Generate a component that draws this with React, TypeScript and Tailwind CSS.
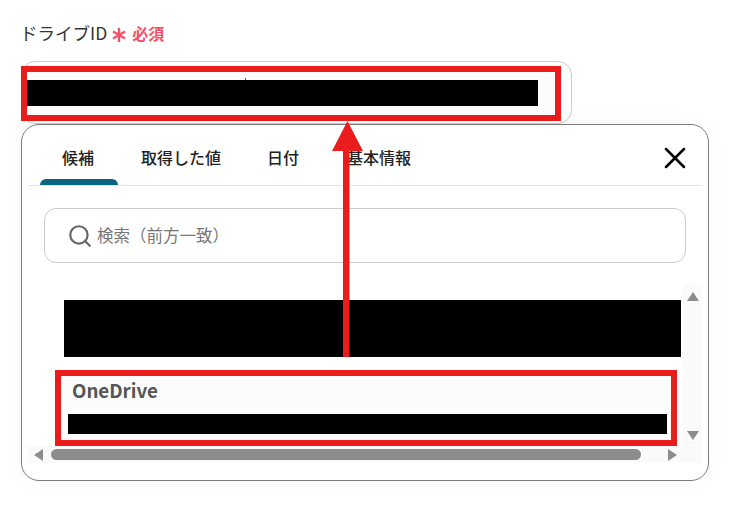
import { X, Search } from "lucide-react";

const tabs = [
  { label: "候補", width: "w-[76px]", active: true },
  { label: "取得した値", width: "w-[82px] ml-[24px]" },
  { label: "日付", width: "w-[34px] ml-[44px]" },
  { label: "基本情報", width: "w-[66px] ml-[46px]" },
];

const App = () => {
  return (
    <div className="relative h-[510px] w-[729px] overflow-hidden bg-white font-['Noto_Sans_CJK_JP','Noto_Sans',sans-serif]">
      <div className="flex h-[61px] items-start pl-[20px] pt-[21px]">
        <span className="text-[17.5px] leading-6 text-[#333333]">ドライブID</span>
        <svg className="ml-[5px] mt-[7px]" width="14" height="14" viewBox="0 0 14 14" stroke="#f7506a" strokeWidth="2.4">
          <path d="M7 0v14M1 3.5l12 7M13 3.5l-12 7" />
        </svg>
        <span className="ml-[6px] text-base leading-6 font-semibold text-[#f7506a]">必須</span>
      </div>

      {/* field */}
      <div className="ml-[21px] h-[63px] w-[551px] rounded-[14px] border border-[#cccccc] bg-white">
        <div className="-ml-px mt-1 h-[55px] w-[540px] border-[6px] border-[#ea1c1c] bg-[#fcfcfc] pt-2">
          <div className="relative h-[26px] w-[511px] bg-black">
            <div className="absolute -top-[2px] left-[218px] h-[2px] w-px bg-[#555555]" />
          </div>
        </div>
      </div>

      {/* modal */}
      <div className="ml-[21px] h-[357px] w-[688px] rounded-[18px] border border-[#7b7b7b] bg-white shadow-[0_0_24px_rgba(0,0,0,0.03)]">
        <div className="mx-[6px] flex h-[61px] items-end border-b border-[#e4e4e4] pl-[12px]">
          {tabs.map((t) => (
            <div key={t.label} className={`relative flex h-full items-center justify-center pt-[4px] text-base font-medium text-[#222222] ${t.width}`}>
              {t.label}
              {t.active && <div className="absolute bottom-0 left-0 h-[6px] w-[78px] rounded-t-[6px] bg-[#0a6680]" />}
            </div>
          ))}
          <button className="mb-[9px] ml-auto mr-[9px] text-black">
            <X size={36} strokeWidth={1.7} />
          </button>
        </div>

        <div className="ml-[22px] mt-[22px] flex h-[55px] w-[642px] items-center rounded-[12px] border border-[#cccccc] pl-[22px] text-[#777777]">
          <Search size={26} strokeWidth={2} className="text-[#666666]" />
          <span className="ml-[4px] text-[16.5px]">検索（前方一致）</span>
        </div>

        {/* list */}
        <div className="relative mx-[6px] mt-[22px] h-[178px] bg-white">
          <div className="ml-[36px] pt-[15px]">
            <div className="h-[57px] w-[617px] bg-black" />
          </div>
          <div className="ml-[27px] mt-[13px] h-[76px] w-[622px] border-[6px] border-[#ea1c1c] bg-[#fcfcfc] pl-[7px]">
            <div className="pl-[4px] pt-[1px] text-[18.7px] leading-[26px] font-semibold text-[#555555]">OneDrive</div>
            <div className="mt-[11px] h-[20px] w-[599px] bg-black" />
          </div>

          {/* vertical scrollbar */}
          <div className="absolute right-0 top-0 flex h-[160px] w-[19px] flex-col items-center justify-between bg-[#fafafa] pb-[5px] pt-[7px]">
            <div className="h-0 w-0 border-x-[6px] border-b-[9px] border-x-transparent border-b-[#8c8c8c]" />
            <div className="h-0 w-0 border-x-[6px] border-t-[9px] border-x-transparent border-t-[#8c8c8c]" />
          </div>

          {/* horizontal scrollbar */}
          <div className="absolute bottom-0 left-0 flex h-[17px] w-full items-center bg-[#fafafa] pl-[6px] pr-[25px]">
            <div className="h-0 w-0 border-y-[6px] border-r-[9px] border-y-transparent border-r-[#8c8c8c]" />
            <div className="ml-[8px] h-[11px] w-[590px] rounded-full bg-[#8c8c8c]" />
            <div className="ml-auto h-0 w-0 border-y-[6px] border-l-[9px] border-y-transparent border-l-[#8c8c8c]" />
          </div>
        </div>
      </div>

      {/* annotation arrow */}
      <svg className="absolute left-[326px] top-[118px]" width="42" height="242" viewBox="0 0 42 242">
        <path d="M17 239V32h6.5v207z" fill="#ea1c1c" />
        <path d="M21.5 3L37 33H6z" fill="#ea1c1c" />
      </svg>
    </div>
  );
};

export default App;
